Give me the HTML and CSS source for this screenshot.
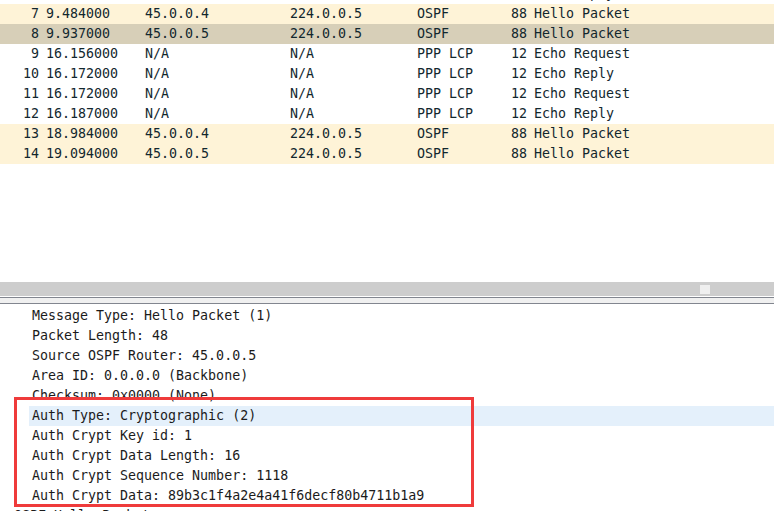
FILE: index.html
```html
<!DOCTYPE html>
<html>
<head>
<meta charset="utf-8">
<link rel="stylesheet" href="styles.css">
</head>
<body>
<div class="app">
  <div class="list">
    <div class="rows">
      <div class="row"><span class="c-no">6</span><span class="c-time">7.531000</span><span class="c-src">N/A</span><span class="c-dst">N/A</span><span class="c-proto">PPP LCP</span><span class="c-len">12</span><span class="c-info">Echo Reply</span></div>
      <div class="row ospf"><span class="c-no">7</span><span class="c-time">9.484000</span><span class="c-src">45.0.0.4</span><span class="c-dst">224.0.0.5</span><span class="c-proto">OSPF</span><span class="c-len">88</span><span class="c-info">Hello Packet</span></div>
      <div class="row selected"><span class="c-no">8</span><span class="c-time">9.937000</span><span class="c-src">45.0.0.5</span><span class="c-dst">224.0.0.5</span><span class="c-proto">OSPF</span><span class="c-len">88</span><span class="c-info">Hello Packet</span></div>
      <div class="row"><span class="c-no">9</span><span class="c-time">16.156000</span><span class="c-src">N/A</span><span class="c-dst">N/A</span><span class="c-proto">PPP LCP</span><span class="c-len">12</span><span class="c-info">Echo Request</span></div>
      <div class="row"><span class="c-no">10</span><span class="c-time">16.172000</span><span class="c-src">N/A</span><span class="c-dst">N/A</span><span class="c-proto">PPP LCP</span><span class="c-len">12</span><span class="c-info">Echo Reply</span></div>
      <div class="row"><span class="c-no">11</span><span class="c-time">16.172000</span><span class="c-src">N/A</span><span class="c-dst">N/A</span><span class="c-proto">PPP LCP</span><span class="c-len">12</span><span class="c-info">Echo Request</span></div>
      <div class="row"><span class="c-no">12</span><span class="c-time">16.187000</span><span class="c-src">N/A</span><span class="c-dst">N/A</span><span class="c-proto">PPP LCP</span><span class="c-len">12</span><span class="c-info">Echo Reply</span></div>
      <div class="row ospf"><span class="c-no">13</span><span class="c-time">18.984000</span><span class="c-src">45.0.0.4</span><span class="c-dst">224.0.0.5</span><span class="c-proto">OSPF</span><span class="c-len">88</span><span class="c-info">Hello Packet</span></div>
      <div class="row ospf"><span class="c-no">14</span><span class="c-time">19.094000</span><span class="c-src">45.0.0.5</span><span class="c-dst">224.0.0.5</span><span class="c-proto">OSPF</span><span class="c-len">88</span><span class="c-info">Hello Packet</span></div>
    </div>
  </div>
  <div class="hscroll"><div class="thumb"></div></div>
  <div class="splitter"></div>
  <div class="details">
    <div class="drow">Message Type: Hello Packet (1)</div>
    <div class="drow">Packet Length: 48</div>
    <div class="drow">Source OSPF Router: 45.0.0.5</div>
    <div class="drow">Area ID: 0.0.0.0 (Backbone)</div>
    <div class="drow">Checksum: 0x0000 (None)</div>
    <div class="drow hl">Auth Type: Cryptographic (2)</div>
    <div class="drow">Auth Crypt Key id: 1</div>
    <div class="drow">Auth Crypt Data Length: 16</div>
    <div class="drow">Auth Crypt Sequence Number: 1118</div>
    <div class="drow">Auth Crypt Data: 89b3c1f4a2e4a41f6decf80b4711b1a9</div>
    <div class="drow top">OSPF Hello Packet</div>
    <div class="annot"></div>
  </div>
</div>
</body>
</html>
```

FILE: styles.css
```css
html, body {
  margin: 0;
  padding: 0;
  background: #ffffff;
}
.app {
  width: 774px;
  height: 511px;
  overflow: hidden;
  display: flex;
  flex-direction: column;
  font-family: "DejaVu Sans Mono", "Liberation Mono", monospace;
  font-size: 13.3px;
  color: #12272e;
}
.list {
  height: 282px;
  overflow: hidden;
  flex: none;
}
.rows {
  margin-top: -16px;
}
.row {
  display: grid;
  grid-template-columns: 39px 106px 145px 127px 94px 16px 1fr;
  height: 20px;
  line-height: 20px;
  white-space: nowrap;
}
.row.ospf { background: #fef3d7; }
.row.selected { background: #d7cfb8; }
.c-no { text-align: right; }
.c-time { padding-left: 7px; }
.c-len { text-align: right; }
.c-info { padding-left: 7px; }
.hscroll {
  flex: none;
  height: 14px;
  background: #cdcdcd;
  border-bottom: 1px solid #ffffff;
  position: relative;
}
.thumb {
  position: absolute;
  left: 700px;
  top: 3px;
  width: 10px;
  height: 9px;
  background: #efefef;
}
.splitter {
  flex: none;
  height: 5px;
  background: #f0f0f0;
  border-top: 1px solid #82868f;
  border-bottom: 1px solid #82868f;
}
.details {
  flex: 1;
  position: relative;
  padding-top: 2px;
  color: #1b1b1b;
}
.drow {
  height: 20px;
  line-height: 20px;
  margin-left: 29px;
  padding-left: 3px;
  white-space: nowrap;
}
.drow.hl { background: #e4f0fb; }
.drow.top { margin-left: 11px; }
.annot {
  position: absolute;
  left: 14px;
  top: 93px;
  width: 454px;
  height: 104px;
  border: 3px solid #ef3b3b;
}
```
